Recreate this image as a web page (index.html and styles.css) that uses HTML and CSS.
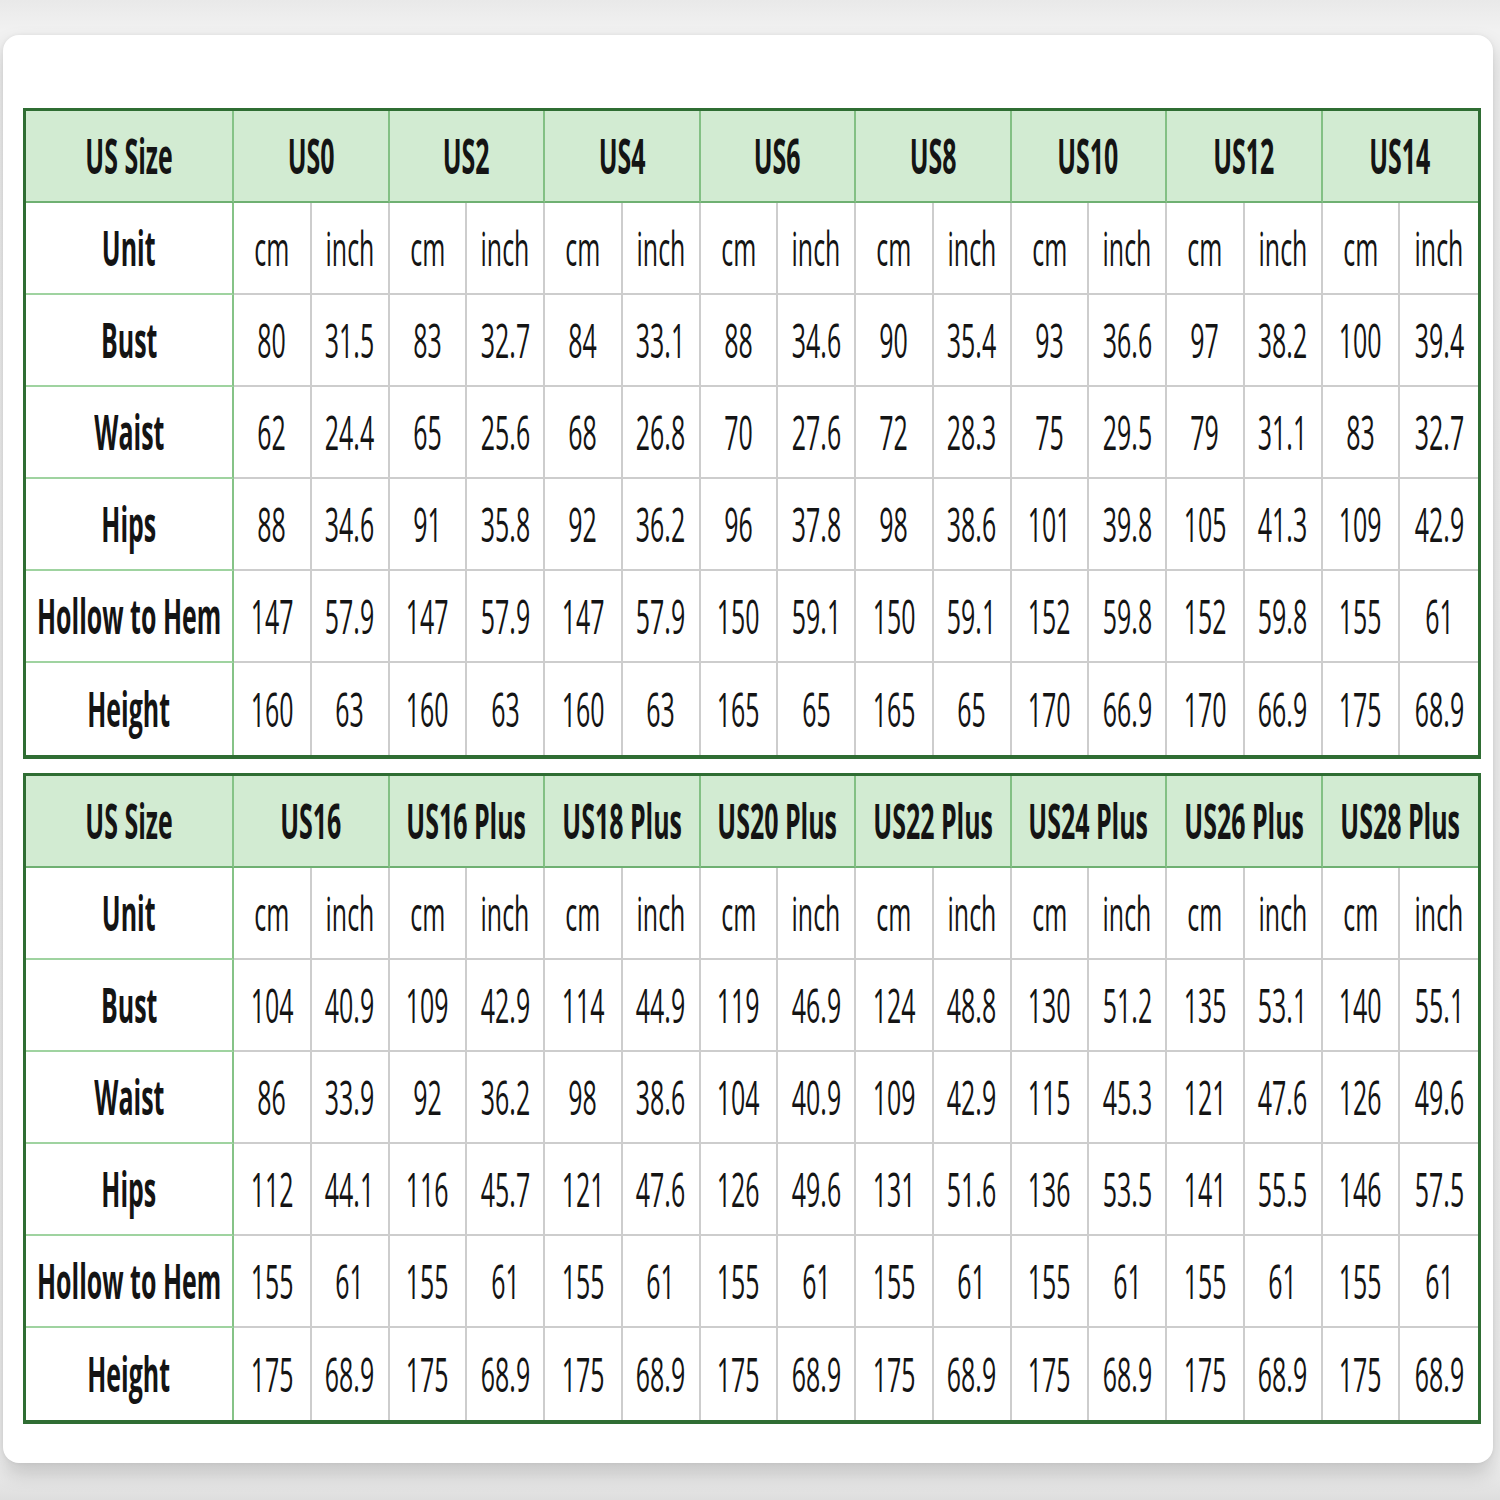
FILE: index.html
```html
<!DOCTYPE html>
<html lang="en">
<head>
<meta charset="utf-8">
<title>Size Chart</title>
<link rel="stylesheet" href="styles.css">
</head>
<body>
<div class="card">
  <table class="chart">
    <colgroup><col class="c-lab"><col span="16"></colgroup>
    <thead>
      <tr><th class="lab"><span class="t">US Size</span></th><th colspan="2"><span class="t">US0</span></th><th colspan="2"><span class="t">US2</span></th><th colspan="2"><span class="t">US4</span></th><th colspan="2"><span class="t">US6</span></th><th colspan="2"><span class="t">US8</span></th><th colspan="2"><span class="t">US10</span></th><th colspan="2"><span class="t">US12</span></th><th colspan="2"><span class="t">US14</span></th></tr>
    </thead>
    <tbody>
      <tr><th class="lab"><span class="t">Unit</span></th><td><span class="t">cm</span></td><td><span class="t">inch</span></td><td><span class="t">cm</span></td><td><span class="t">inch</span></td><td><span class="t">cm</span></td><td><span class="t">inch</span></td><td><span class="t">cm</span></td><td><span class="t">inch</span></td><td><span class="t">cm</span></td><td><span class="t">inch</span></td><td><span class="t">cm</span></td><td><span class="t">inch</span></td><td><span class="t">cm</span></td><td><span class="t">inch</span></td><td><span class="t">cm</span></td><td><span class="t">inch</span></td></tr>
      <tr><th class="lab"><span class="t">Bust</span></th><td><span class="t">80</span></td><td><span class="t">31.5</span></td><td><span class="t">83</span></td><td><span class="t">32.7</span></td><td><span class="t">84</span></td><td><span class="t">33.1</span></td><td><span class="t">88</span></td><td><span class="t">34.6</span></td><td><span class="t">90</span></td><td><span class="t">35.4</span></td><td><span class="t">93</span></td><td><span class="t">36.6</span></td><td><span class="t">97</span></td><td><span class="t">38.2</span></td><td><span class="t">100</span></td><td><span class="t">39.4</span></td></tr>
      <tr><th class="lab"><span class="t">Waist</span></th><td><span class="t">62</span></td><td><span class="t">24.4</span></td><td><span class="t">65</span></td><td><span class="t">25.6</span></td><td><span class="t">68</span></td><td><span class="t">26.8</span></td><td><span class="t">70</span></td><td><span class="t">27.6</span></td><td><span class="t">72</span></td><td><span class="t">28.3</span></td><td><span class="t">75</span></td><td><span class="t">29.5</span></td><td><span class="t">79</span></td><td><span class="t">31.1</span></td><td><span class="t">83</span></td><td><span class="t">32.7</span></td></tr>
      <tr><th class="lab"><span class="t">Hips</span></th><td><span class="t">88</span></td><td><span class="t">34.6</span></td><td><span class="t">91</span></td><td><span class="t">35.8</span></td><td><span class="t">92</span></td><td><span class="t">36.2</span></td><td><span class="t">96</span></td><td><span class="t">37.8</span></td><td><span class="t">98</span></td><td><span class="t">38.6</span></td><td><span class="t">101</span></td><td><span class="t">39.8</span></td><td><span class="t">105</span></td><td><span class="t">41.3</span></td><td><span class="t">109</span></td><td><span class="t">42.9</span></td></tr>
      <tr><th class="lab"><span class="t">Hollow to Hem</span></th><td><span class="t">147</span></td><td><span class="t">57.9</span></td><td><span class="t">147</span></td><td><span class="t">57.9</span></td><td><span class="t">147</span></td><td><span class="t">57.9</span></td><td><span class="t">150</span></td><td><span class="t">59.1</span></td><td><span class="t">150</span></td><td><span class="t">59.1</span></td><td><span class="t">152</span></td><td><span class="t">59.8</span></td><td><span class="t">152</span></td><td><span class="t">59.8</span></td><td><span class="t">155</span></td><td><span class="t">61</span></td></tr>
      <tr><th class="lab"><span class="t">Height</span></th><td><span class="t">160</span></td><td><span class="t">63</span></td><td><span class="t">160</span></td><td><span class="t">63</span></td><td><span class="t">160</span></td><td><span class="t">63</span></td><td><span class="t">165</span></td><td><span class="t">65</span></td><td><span class="t">165</span></td><td><span class="t">65</span></td><td><span class="t">170</span></td><td><span class="t">66.9</span></td><td><span class="t">170</span></td><td><span class="t">66.9</span></td><td><span class="t">175</span></td><td><span class="t">68.9</span></td></tr>
    </tbody>
  </table>

  <table class="chart">
    <colgroup><col class="c-lab"><col span="16"></colgroup>
    <thead>
      <tr><th class="lab"><span class="t">US Size</span></th><th colspan="2"><span class="t">US16</span></th><th colspan="2"><span class="t">US16 Plus</span></th><th colspan="2"><span class="t">US18 Plus</span></th><th colspan="2"><span class="t">US20 Plus</span></th><th colspan="2"><span class="t">US22 Plus</span></th><th colspan="2"><span class="t">US24 Plus</span></th><th colspan="2"><span class="t">US26 Plus</span></th><th colspan="2"><span class="t">US28 Plus</span></th></tr>
    </thead>
    <tbody>
      <tr><th class="lab"><span class="t">Unit</span></th><td><span class="t">cm</span></td><td><span class="t">inch</span></td><td><span class="t">cm</span></td><td><span class="t">inch</span></td><td><span class="t">cm</span></td><td><span class="t">inch</span></td><td><span class="t">cm</span></td><td><span class="t">inch</span></td><td><span class="t">cm</span></td><td><span class="t">inch</span></td><td><span class="t">cm</span></td><td><span class="t">inch</span></td><td><span class="t">cm</span></td><td><span class="t">inch</span></td><td><span class="t">cm</span></td><td><span class="t">inch</span></td></tr>
      <tr><th class="lab"><span class="t">Bust</span></th><td><span class="t">104</span></td><td><span class="t">40.9</span></td><td><span class="t">109</span></td><td><span class="t">42.9</span></td><td><span class="t">114</span></td><td><span class="t">44.9</span></td><td><span class="t">119</span></td><td><span class="t">46.9</span></td><td><span class="t">124</span></td><td><span class="t">48.8</span></td><td><span class="t">130</span></td><td><span class="t">51.2</span></td><td><span class="t">135</span></td><td><span class="t">53.1</span></td><td><span class="t">140</span></td><td><span class="t">55.1</span></td></tr>
      <tr><th class="lab"><span class="t">Waist</span></th><td><span class="t">86</span></td><td><span class="t">33.9</span></td><td><span class="t">92</span></td><td><span class="t">36.2</span></td><td><span class="t">98</span></td><td><span class="t">38.6</span></td><td><span class="t">104</span></td><td><span class="t">40.9</span></td><td><span class="t">109</span></td><td><span class="t">42.9</span></td><td><span class="t">115</span></td><td><span class="t">45.3</span></td><td><span class="t">121</span></td><td><span class="t">47.6</span></td><td><span class="t">126</span></td><td><span class="t">49.6</span></td></tr>
      <tr><th class="lab"><span class="t">Hips</span></th><td><span class="t">112</span></td><td><span class="t">44.1</span></td><td><span class="t">116</span></td><td><span class="t">45.7</span></td><td><span class="t">121</span></td><td><span class="t">47.6</span></td><td><span class="t">126</span></td><td><span class="t">49.6</span></td><td><span class="t">131</span></td><td><span class="t">51.6</span></td><td><span class="t">136</span></td><td><span class="t">53.5</span></td><td><span class="t">141</span></td><td><span class="t">55.5</span></td><td><span class="t">146</span></td><td><span class="t">57.5</span></td></tr>
      <tr><th class="lab"><span class="t">Hollow to Hem</span></th><td><span class="t">155</span></td><td><span class="t">61</span></td><td><span class="t">155</span></td><td><span class="t">61</span></td><td><span class="t">155</span></td><td><span class="t">61</span></td><td><span class="t">155</span></td><td><span class="t">61</span></td><td><span class="t">155</span></td><td><span class="t">61</span></td><td><span class="t">155</span></td><td><span class="t">61</span></td><td><span class="t">155</span></td><td><span class="t">61</span></td><td><span class="t">155</span></td><td><span class="t">61</span></td></tr>
      <tr><th class="lab"><span class="t">Height</span></th><td><span class="t">175</span></td><td><span class="t">68.9</span></td><td><span class="t">175</span></td><td><span class="t">68.9</span></td><td><span class="t">175</span></td><td><span class="t">68.9</span></td><td><span class="t">175</span></td><td><span class="t">68.9</span></td><td><span class="t">175</span></td><td><span class="t">68.9</span></td><td><span class="t">175</span></td><td><span class="t">68.9</span></td><td><span class="t">175</span></td><td><span class="t">68.9</span></td><td><span class="t">175</span></td><td><span class="t">68.9</span></td></tr>
    </tbody>
  </table>
</div>
</body>
</html>
```

FILE: styles.css
```css
html, body {
  margin: 0;
  padding: 0;
}

body {
  width: 1500px;
  height: 1500px;
  overflow: hidden;
  background: linear-gradient(180deg, #e9e9e9 0px, #f1f1f1 30px, #efefef 1460px, #dedede 1500px);
  font-family: "Open Sans", "Liberation Sans", sans-serif;
  color: #141414;
}

.card {
  box-sizing: border-box;
  margin: 35px 7px 0 3px;
  height: 1428px;
  padding: 73px 0 0 20px;
  background: #ffffff;
  border-radius: 16px;
  box-shadow: 0 10px 20px rgba(0, 0, 0, 0.18), 0 0 4px rgba(0, 0, 0, 0.05);
}

.chart {
  width: 1458px;
  table-layout: fixed;
  border-collapse: separate;
  border-spacing: 0;
  border: 3px solid #2f6d33;
  border-bottom-width: 4px;
}

.chart + .chart {
  margin-top: 14px;
}

.c-lab {
  width: 208px;
}

.chart tr {
  height: 92px;
}

.chart th,
.chart td {
  padding: 0;
  text-align: center;
  vertical-align: middle;
  font-size: 48px;
  line-height: 1;
  font-weight: 400;
  border-right: 2px solid #cdcdcd;
  border-bottom: 2px solid #cdcdcd;
  white-space: nowrap;
}

.chart tr > :last-child {
  border-right: 0;
}

.chart tbody tr:last-child > * {
  border-bottom: 0;
}

.chart thead th {
  background: #d2ebd2;
  font-weight: 700;
  border-right-color: #83c084;
  border-bottom-color: #6fb072;
}

.chart th.lab {
  font-weight: 700;
  border-right-color: #86c387;
  border-bottom-color: #9fd3a0;
}

.chart thead th.lab {
  border-bottom-color: #6fb072;
}

/* Condensed text: glyphs squeezed horizontally; negative side margins
   keep the layout box narrow so the text stays centred in its cell. */
.t {
  display: inline-block;
  white-space: nowrap;
  margin: 0 -160px;
  transform: scaleX(0.52);
  transform-origin: center;
}
```
